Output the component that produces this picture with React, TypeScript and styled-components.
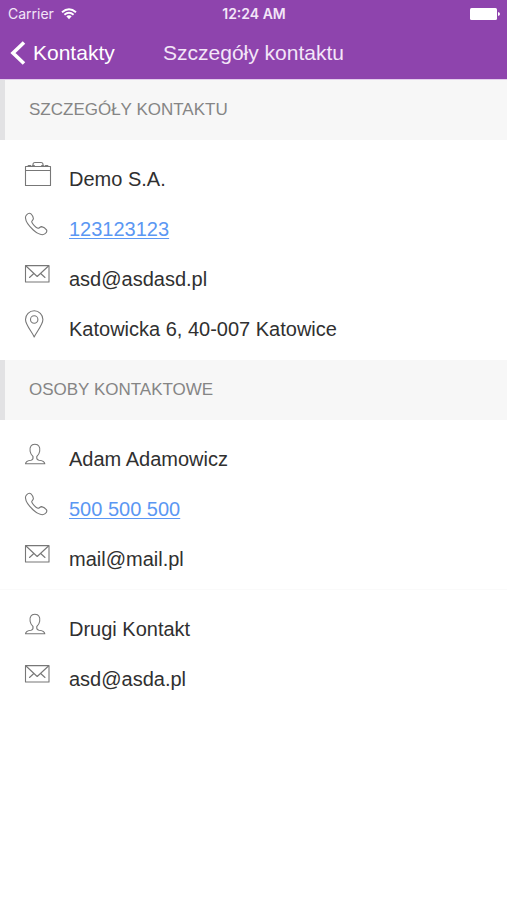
import React from 'react';
import styled, { createGlobalStyle } from 'styled-components';

const GlobalStyle = createGlobalStyle`
  * { box-sizing: border-box; }
  body {
    margin: 0;
    background: #ffffff;
    color: #303030;
    font-family: "Liberation Sans", Arial, sans-serif;
  }
`;

const Header = styled.header`
  color: #f3e6f8;
  background: #8e44ad;
  border-bottom: 1px solid #e3cdec;
`;

const StatusBar = styled.div`
  display: grid;
  grid-template-columns: 1fr auto 1fr;
  align-items: center;
  height: 27px;
  padding: 0 7px 0 8px;
  font-family: Inter, sans-serif;
  font-size: 14px;
  line-height: 16px;
`;

const Carrier = styled.div`
  display: flex;
  align-items: center;
  gap: 7px;
`;

const Clock = styled.time`
  font-weight: 600;
`;

const Battery = styled.svg`
  justify-self: end;
`;

const NavBar = styled.nav`
  display: grid;
  grid-template-columns: 1fr auto 1fr;
  align-items: center;
  height: 52px;
  padding: 0 10px;
  font-size: 21px;
  line-height: 28px;
`;

const BackButton = styled.button`
  display: flex;
  align-items: center;
  justify-self: start;
  gap: 7px;
  padding: 0;
  border: 0;
  background: none;
  color: #ffffff;
  font: inherit;
  cursor: pointer;
`;

const Title = styled.h1`
  margin: 0;
  font: inherit;
`;

const SectionTitle = styled.h2`
  margin: 0;
  padding: 0 24px;
  border-left: 5px solid #e2e2e4;
  background: #f7f7f7;
  color: #858585;
  font-size: 17px;
  font-weight: 400;
  line-height: 60px;
`;

const Group = styled.ul`
  margin: 0;
  padding: 10px 24px;
  list-style: none;

  &:not(:last-child) {
    padding-bottom: 9px;
    border-bottom: 1px solid #fafafa;
  }
`;

const Row = styled.li`
  display: flex;
  height: 50px;
  gap: 17px;
`;

const IconSlot = styled.span`
  display: flex;
  align-items: center;
  flex: 0 0 28px;
  height: 48px;
`;

const Value = styled.span`
  padding-top: 8px;
  font-size: 20px;
  line-height: 42px;
`;

const PhoneLink = styled.a`
  color: #5b97f3;
  text-decoration: underline;
  text-decoration-thickness: 1px;
  text-underline-offset: 2px;
`;

const LineIcon = styled.svg`
  fill: none;
  stroke: #777777;
  stroke-width: 1.1;
  stroke-linejoin: round;
  stroke-linecap: round;
`;

type IconName = 'company' | 'phone' | 'mail' | 'pin' | 'person';

const icons: Record<IconName, React.ReactElement> = {
  company: (
    <LineIcon width="28" height="26" viewBox="0 0 28 26" aria-hidden="true">
      <path d="M1.5 5.5h25v19h-25zM1.5 9.5h25" />
      <path d="M9 5.5V3.5q0-2 2-2h6q2 0 2 2v2" />
      <path d="M4.5 5h2M21.500 5h2M9 5h1M18 5h1" strokeWidth="2" />
    </LineIcon>
  ),
  phone: (
    <LineIcon width="24" height="24" viewBox="0 0 24 24" aria-hidden="true">
      <path d="M2.6 2.9C3.9 1.5 5.9 1 7 1.900C8.4 3.2 9.1 5 9.4 6.5C9.5 7.9 7.6 8.6 7.7 9.900C8.2 11.8 11.9 15.7 14 16.3C15.3 16.500 16.1 14.500 17.6 14.600C19.3 15 21.5 16.500 22.5 17.900C23.3 19.200 22.2 20.900 20.8 21.900C18.3 23.700 13.5 21.900 9.3 18C5.2 14.200 1.7 9.200 1.5 6C1.4 4.900 1.7 3.800 2.6 2.900Z" />
    </LineIcon>
  ),
  mail: (
    <LineIcon width="26" height="18" viewBox="0 0 26 18" aria-hidden="true">
      <path d="M1.5 .6h23.500v16.400h-23.500z" />
      <path d="M2 1l11.200 10.500L24.500 1M5.500 12.500l3.800-3.500M21 12.500l-3.800-3.500" />
    </LineIcon>
  ),
  pin: (
    <LineIcon width="20" height="28" viewBox="0 0 20 28" aria-hidden="true">
      <path d="M10.200 27C8.500 22.500 1.500 15 1.500 9.500A8.700 8.700 0 0 1 18.900 9.500C18.900 15 12 22.500 10.200 27Z" />
      <circle cx="10.200" cy="9.500" r="3.700" />
    </LineIcon>
  ),
  person: (
    <LineIcon width="22" height="22" viewBox="0 0 22 22" aria-hidden="true">
      <path d="M9 13.500C5.800 11 5.200 5.500 6.800 3.200C8.300 .6 13.500 .6 15 3.200C16.600 5.500 16 11 12.800 13.500C12.500 15.600 13 16.900 15 17.200C18.500 17.500 20.500 18.300 20.800 20.800H1.500C1.800 18.300 3.500 17.500 7 17.200C8.800 16.900 9.300 15.600 9 13.500Z" />
    </LineIcon>
  ),
};

interface Detail {
  icon: IconName;
  text: string;
}

const company: Detail[] = [
  { icon: 'company', text: 'Demo S.A.' },
  { icon: 'phone', text: '123123123' },
  { icon: 'mail', text: 'asd@asdasd.pl' },
  { icon: 'pin', text: 'Katowicka 6, 40-007 Katowice' },
];

const people: Detail[][] = [
  [
    { icon: 'person', text: 'Adam Adamowicz' },
    { icon: 'phone', text: '500 500 500' },
    { icon: 'mail', text: 'mail@mail.pl' },
  ],
  [
    { icon: 'person', text: 'Drugi Kontakt' },
    { icon: 'mail', text: 'asd@asda.pl' },
  ],
];

function DetailGroup({ details }: { details: Detail[] }) {
  return (
    <Group>
      {details.map(({ icon, text }) => (
        <Row key={icon}>
          <IconSlot>{icons[icon]}</IconSlot>
          <Value>
            {icon === 'phone' ? (
              <PhoneLink href={`tel:${text.replace(/\s/g, '')}`}>{text}</PhoneLink>
            ) : (
              text
            )}
          </Value>
        </Row>
      ))}
    </Group>
  );
}

export default function App() {
  return (
    <>
      <GlobalStyle />
      <Header>
        <StatusBar>
          <Carrier>
            Carrier
            <svg width="16" height="12" viewBox="0 0 16 12" fill="none" stroke="#ffffff" strokeWidth="1.9" aria-hidden="true">
              <path d="M1 4.300Q8-2 15 4.300M3.400 6.800Q8 2.800 12.600 6.800" />
              <path d="M5.300 8.300Q8 6.300 10.700 8.300L8 11.200Z" fill="#ffffff" stroke="none" />
            </svg>
          </Carrier>
          <Clock>12:24 AM</Clock>
          <Battery width="30" height="12" viewBox="0 0 30 12" fill="#ffffff" aria-hidden="true">
            <rect x="0" y="0" width="27" height="12" rx="1.5" />
            <path d="M28 4q2 .4 2 2t-2 2z" />
          </Battery>
        </StatusBar>
        <NavBar>
          <BackButton type="button">
            <svg width="16" height="24" viewBox="0 0 16 24" fill="none" stroke="#ffffff" strokeWidth="3.6" aria-hidden="true">
              <path d="M14 1.5L3 12L14 22.5" />
            </svg>
            Kontakty
          </BackButton>
          <Title>Szczegóły kontaktu</Title>
        </NavBar>
      </Header>
      <main>
        <section>
          <SectionTitle>SZCZEGÓŁY KONTAKTU</SectionTitle>
          <DetailGroup details={company} />
        </section>
        <section>
          <SectionTitle>OSOBY KONTAKTOWE</SectionTitle>
          {people.map((details) => (
            <DetailGroup key={details[0].text} details={details} />
          ))}
        </section>
      </main>
    </>
  );
}
